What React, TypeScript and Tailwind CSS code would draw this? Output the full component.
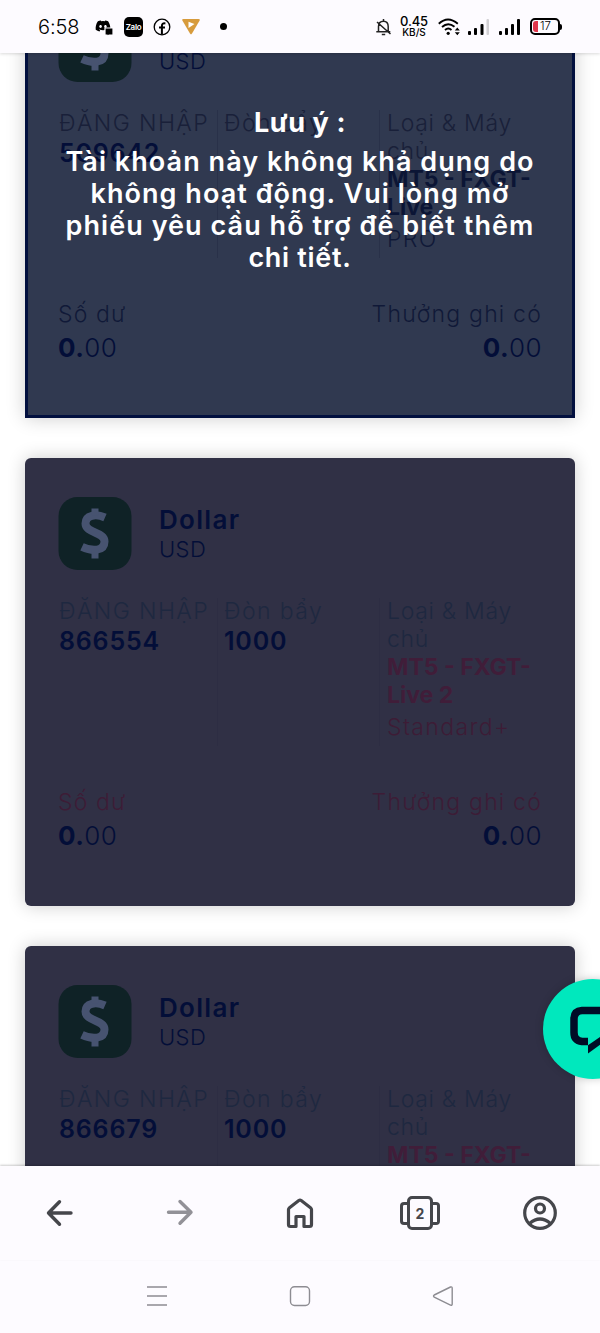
import React from 'react';
import { FaDiscord } from 'react-icons/fa';

interface Account {
  login: string;
  leverage: string;
  server: [string, string];
  type: string;
  selected?: boolean;
}

const accounts: Account[] = [
  { login: '509642', leverage: '1000', server: ['MT5 - FXGT-', 'Live'], type: 'PRO', selected: true },
  { login: '866554', leverage: '1000', server: ['MT5 - FXGT-', 'Live 2'], type: 'Standard+' },
  { login: '866679', leverage: '1000', server: ['MT5 - FXGT-', 'Live 2'], type: 'Standard+' },
];

const StatusBar: React.FC = () => (
  <header className="relative z-10 flex h-[53px] shrink-0 items-center bg-[#fdfbff] pl-[38px] text-black shadow-[0_1px_3px_rgba(0,0,0,0.15)]">
    <span className="w-[57px] pt-px text-[20px] font-light tracking-[-0.1px]">6:58</span>
    <svg className="mr-2.5 h-5 w-[19px]" viewBox="0 0 19 20">
      <FaDiscord x="0" y="1" width="18" height="17" />
      <path d="M10 11h8v7h-4l-2 2v-2h-2z" stroke="#fdfbff" strokeWidth="1.2" />
    </svg>
    <span className="mr-2.5 flex h-5 w-[19px] items-center justify-center rounded-[5px] bg-black text-[8px] font-semibold tracking-[-0.3px] text-white">
      Zalo
    </span>
    <svg className="mr-[11px] h-[18px] w-[18px]" viewBox="0 0 18 18" fill="none" stroke="#000">
      <circle cx="9" cy="9" r="7.8" strokeWidth="1.3" />
      <path d="M8.9 16.5V8c0-2 1-3 3.5-2.6M6 9.5h6" strokeWidth="2" />
    </svg>
    <svg className="mr-5 h-4 w-[18px]" viewBox="0 0 18 16">
      <path d="M1.5 0h15q2 0 1 1.8L10 14.6q-1 1.6-2 0L.5 1.8Q-.5 0 1.5 0z" fill="#d79b3c" />
      <path d="M6.5 2.7v6.2L12.5 5z" fill="#fff" />
    </svg>
    <span className="mr-[148px] h-[7px] w-[7px] rounded-full bg-black" />
    <svg className="mr-2 h-[18px] w-[17px]" viewBox="0 0 17 18" fill="none" stroke="#222" strokeWidth="1.5">
      <path d="M3.5 13V8.500C3.500 5 5.500 3.200 8.500 3.200s4.700 1.800 4.700 5.300V13M1.300 13.700h14M8.500 1v2.200M6.800 16.500h3.400M2 4l13.500 12" />
    </svg>
    <span className="mr-2.5 flex w-[28px] flex-col items-center leading-none">
      <span className="text-[13px] font-medium leading-[11px] tracking-[-0.2px]">0.45</span>
      <span className="text-[10px] font-medium leading-[11px]">KB/S</span>
    </span>
    <svg className="mr-[7px] h-[18px] w-[23px]" viewBox="0 0 23 18" fill="none" stroke="#000" strokeWidth="1.9">
      <path d="M.8 5.7q9-8.5 19 0M4 9q6-5.5 12.500-.2M7 12q3.300-2.800 6.500 0" />
      <circle cx="10.2" cy="15.3" r="1.6" fill="#000" stroke="none" />
      <path d="M16.8 12.5l2.5-3 2.5 3zM16.8 14.2l2.5 3 2.5-3z" fill="#000" stroke="none" />
    </svg>
    <svg className="mr-[9px] h-[18px] w-[22px]" viewBox="0 0 22 18" fill="#000">
      <rect x="0" y="13" width="3" height="4" rx="1" />
      <rect x="6" y="10" width="3" height="7" rx="1" />
      <rect x="12.5" y="6" width="3" height="11" rx="1" />
      <rect x="18.5" y="1" width="2.5" height="16" rx="1" fill="#d2d0d4" />
    </svg>
    <svg className="mr-[9px] h-[18px] w-[22px]" viewBox="0 0 22 18" fill="#000">
      <rect x="0" y="13" width="3" height="4" rx="1" />
      <rect x="6" y="10" width="3" height="7" rx="1" />
      <rect x="12" y="6" width="3" height="11" rx="1" />
      <rect x="18" y="1" width="3" height="16" rx="1" />
    </svg>
    <span className="flex items-center">
      <span className="flex h-[17px] w-[30px] items-center rounded-[5px] border-2 border-black pl-px">
        <span className="h-[11px] w-[5px] rounded-l-[3px] bg-[#e0354b]" />
        <span className="pl-0.5 text-[11.5px] leading-none font-light">17</span>
      </span>
      <span className="h-1.5 w-0.5 rounded-r-sm bg-black" />
    </span>
  </header>
);

const DollarIcon: React.FC = () => (
  <svg className="h-[73px] w-[74px]" viewBox="0 0 74 73">
    <rect x="0.5" width="73" height="73" rx="19" fill="#0f2226" />
    <path
      d="M47 20.5C38 16.5 27.5 18 27.5 26.5C27.5 36.5 46.5 34.5 46.5 44.5C46.5 54.5 34 54.5 24 49.8"
      fill="none"
      stroke="#475370"
      strokeWidth="8"
    />
    <path d="M33.5 11.5h7v7h-7zM33.5 53h7v8.5h-7z" fill="#475370" />
  </svg>
);

const Amount: React.FC = () => (
  <div className="pt-px text-[26px] leading-[34px] font-light tracking-[0.4px]">
    <span className="font-bold">0.</span>00
  </div>
);

const AccountCard: React.FC<{ account: Account }> = ({ account }) => {
  const { selected } = account;
  const label = selected ? 'text-[#192039]' : 'text-[#1e2840]';
  const accent = selected ? 'text-[#0b1535]' : 'text-[#401d39]';
  const footnote = selected ? 'text-[#101938]' : 'text-[#3d1c36]';
  const divider = selected ? 'border-[#293149]' : 'border-[#2d2d43]';

  return (
    <article
      className={`relative h-[448px] shrink-0 px-[33px] pt-[39px] text-[#030e38] shadow-[0_0_18px_rgba(0,0,0,0.2)] ${
        selected ? 'bg-[#303950] ring-[3px] ring-inset ring-[#02103f]' : 'rounded-md bg-[#303045]'
      }`}
    >
      <div className="flex h-[73px] items-center gap-[27px]">
        <DollarIcon />
        <div>
          <div className="text-[26px] leading-8 font-semibold tracking-[1.3px]">Dollar</div>
          <div className="-mt-px text-[22px] leading-7 font-light tracking-[0.4px]">USD</div>
        </div>
      </div>

      <div className="mt-7 flex h-[148px] text-[23px] leading-7 whitespace-nowrap">
        <div className={`w-[160px] border-r pl-px ${divider}`}>
          <div className={`-mt-px font-light tracking-[1.4px] ${label}`}>ĐĂNG NHẬP</div>
          <div className="text-[25px] leading-8 font-semibold tracking-[0.8px]">{account.login}</div>
        </div>
        <div className={`w-[162px] border-r pl-1.5 ${divider}`}>
          <div className={`-mt-px font-light tracking-[1.4px] ${label}`}>Đòn bẩy</div>
          {!selected && (
            <div className="text-[25px] leading-8 font-semibold tracking-[0.8px]">{account.leverage}</div>
          )}
        </div>
        <div className="pl-[7px]">
          <div className={`-mt-px font-light tracking-[0.7px] ${label}`}>Loại &amp; Máy<br />chủ</div>
          <div className={`font-bold ${accent}`}>{account.server[0]}<br />{account.server[1]}</div>
          <div className={`mt-1 font-light tracking-[1.4px] ${footnote}`}>{account.type}</div>
        </div>
      </div>

      <div className="mt-10 flex justify-between text-[23px] leading-8 font-light">
        <div>
          <div className={`tracking-[1.1px] ${footnote}`}>Số dư</div>
          <Amount />
        </div>
        <div className="text-right">
          <div className={`tracking-[1.2px] ${footnote}`}>Thưởng ghi có</div>
          <Amount />
        </div>
      </div>

      {selected && (
        <div className="absolute inset-x-0 top-[137px] text-center text-[27px] leading-8 font-semibold tracking-[1.05px] whitespace-nowrap text-white">
          <div className="mb-[7px] font-bold tracking-[0.6px]">Lưu ý :</div>
          Tài khoản này không khả dụng do<br />
          không hoạt động. Vui lòng mở<br />
          phiếu yêu cầu hỗ trợ để biết thêm<br />
          <span className="tracking-[0.7px]">chi tiết.</span>
        </div>
      )}
    </article>
  );
};

const ChatButton: React.FC = () => (
  <button className="absolute top-[926px] left-[543px] h-[100px] w-[100px] rounded-full bg-[#00e8bd] shadow-[0_0_8px_rgba(0,0,0,0.2)]">
    <svg className="h-full w-full" viewBox="0 0 100 100">
      <path d="M45 62.5h-6q-8-1-8-9V40q0-8 8-8.500h22q8 .5 8 8.500V54q0 4-4 7" fill="none" stroke="#000c26" strokeWidth="7.5" />
      <path d="M45 66.200l12-8.300v7.800L45 74.500z" fill="#000c26" />
    </svg>
  </button>
);

const BrowserBar: React.FC = () => (
  <nav className="relative z-10 grid h-[94px] shrink-0 grid-cols-5 place-items-center bg-[#fdfbff] text-[#45464b] shadow-[0_-1px_2px_rgba(0,0,0,0.2)]">
    <svg className="h-10 w-10" viewBox="0 0 40 40" fill="none" stroke="currentColor" strokeWidth="3.4" strokeLinecap="round" strokeLinejoin="round">
      <path d="M31 20H8.500M19.500 8.800L8.500 20l11 11.200" />
    </svg>
    <svg className="h-10 w-10 text-[#929197]" viewBox="0 0 40 40" fill="none" stroke="currentColor" strokeWidth="3.4" strokeLinecap="round" strokeLinejoin="round">
      <path d="M8.500 19.300h22.500M20 8.500l11 10.800L20 30.300" />
    </svg>
    <svg className="h-10 w-10" viewBox="0 0 40 40" fill="none" stroke="currentColor" strokeWidth="3.2" strokeLinejoin="round">
      <path d="M8.500 16.500q0-1 1-1.800L18.800 7.500q1.200-.8 2.400 0l9.300 7.200q1 .8 1 1.800V31.500q0 2-2 2h-5.500V23.500h-8v10h-5.500q-2 0-2-2z" />
    </svg>
    <div className="flex items-center">
      <span className="h-[23px] w-[9px] rounded-l border-[3px] border-r-0 border-current" />
      <span className="-mx-0.5 flex h-[34px] w-[26px] items-center justify-center rounded-[5px] border-[3px] border-current bg-[#fdfbff] text-[14px] font-bold">
        2
      </span>
      <span className="h-[23px] w-[9px] rounded-r border-[3px] border-l-0 border-current" />
    </div>
    <svg className="h-10 w-10" viewBox="0 0 40 40" fill="none" stroke="currentColor" strokeWidth="3.2">
      <circle cx="20" cy="20" r="15.3" />
      <circle cx="20" cy="15.5" r="4.5" />
      <path d="M9.500 30.500q10.500-9 21 0" />
    </svg>
  </nav>
);

const SystemNav: React.FC = () => (
  <nav className="flex h-[73px] shrink-0 justify-center gap-[119px] bg-[#fdfbff] pt-6 text-[#8d8c92]">
    <svg className="h-6 w-6" viewBox="0 0 24 24" fill="none" stroke="currentColor" strokeWidth="1.5">
      <path d="M2 3h20M2 12h20M2 21h20" />
    </svg>
    <svg className="h-6 w-6" viewBox="0 0 24 24" fill="none" stroke="currentColor" strokeWidth="1.4">
      <rect x="2.5" y="2.8" width="19" height="18.7" rx="4" />
    </svg>
    <svg className="h-6 w-6" viewBox="0 0 24 24" fill="none" stroke="currentColor" strokeWidth="1.4" strokeLinejoin="round">
      <path d="M3.200 11L19.500 3q1.700-.5 1.700 1.200V20q0 1.700-1.700 1.200L3.200 13.200q-1.400-1.100 0-2.200z" />
    </svg>
  </nav>
);

const App: React.FC = () => {
  return (
    <div className="flex h-[1333px] w-[600px] flex-col overflow-hidden bg-white font-['Inter',sans-serif]">
      <StatusBar />
      <main className="relative h-[1113px] shrink-0 overflow-hidden">
        <div className="-mt-[83px] flex flex-col gap-10 px-[25px]">
          {accounts.map((account) => (
            <AccountCard key={account.login} account={account} />
          ))}
        </div>
        <ChatButton />
      </main>
      <BrowserBar />
      <SystemNav />
    </div>
  );
};

export default App;
